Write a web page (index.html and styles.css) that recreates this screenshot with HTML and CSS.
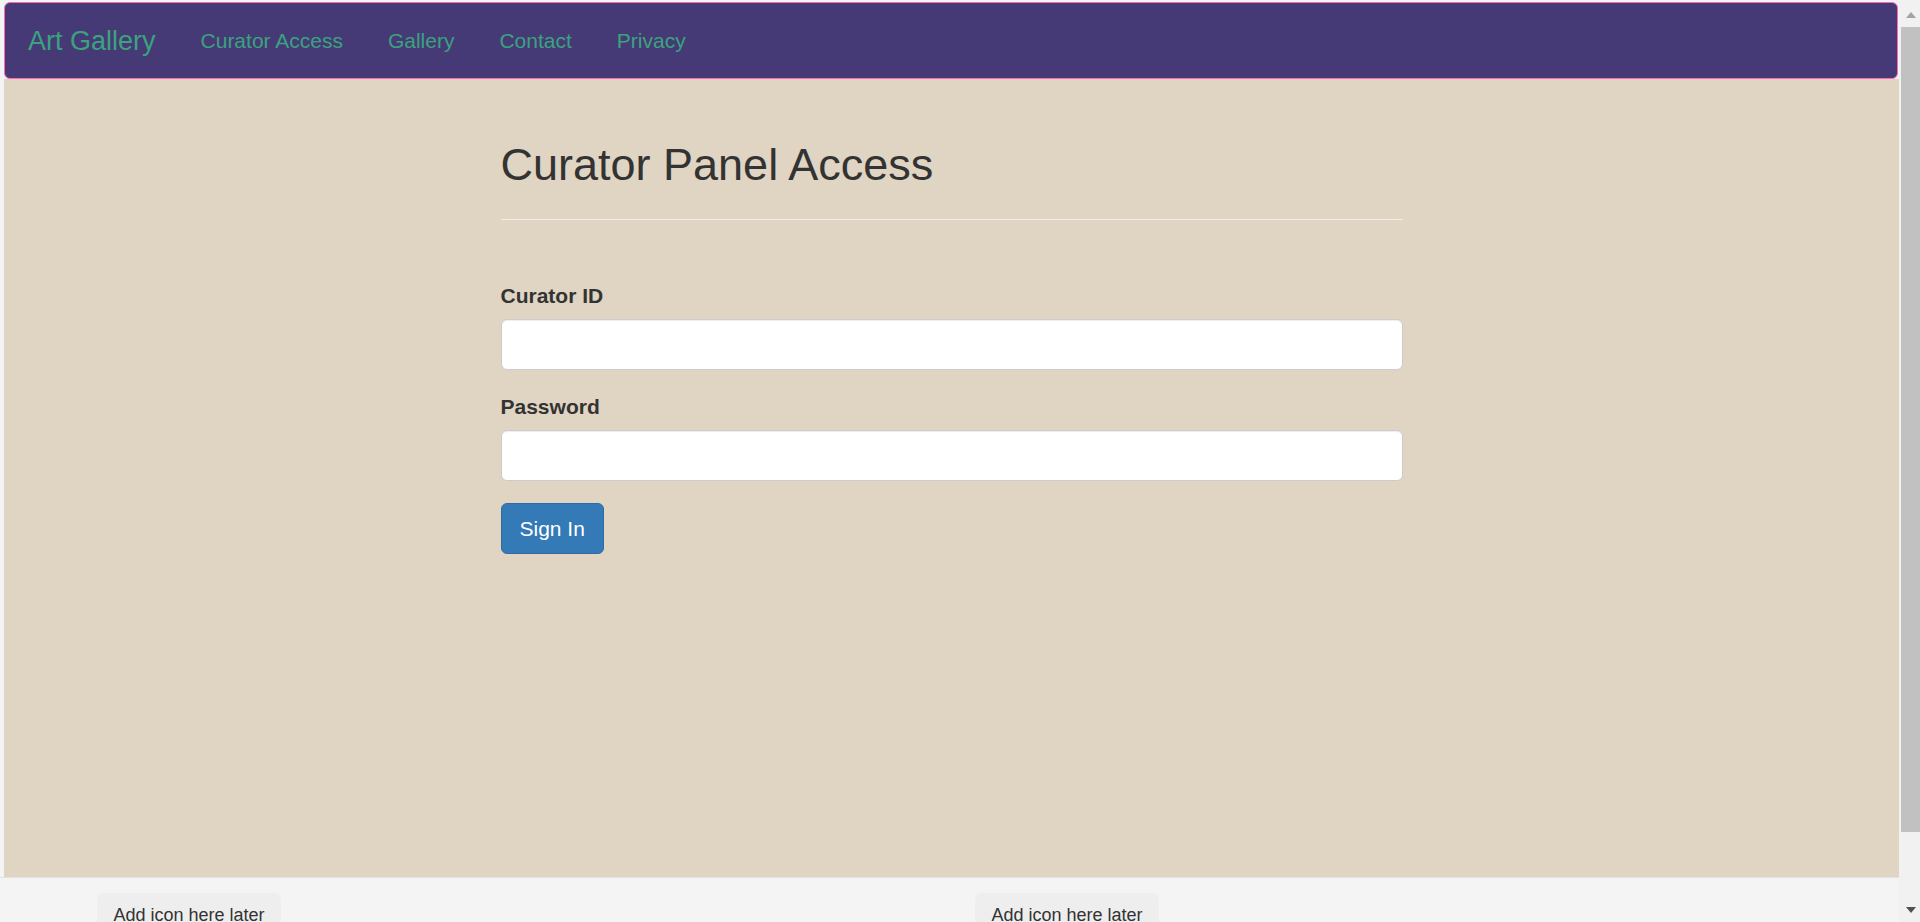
FILE: index.html
```html
<!DOCTYPE html>
<html lang="en">
<head>
<meta charset="utf-8">
<title>Art Gallery - Curator Panel Access</title>
<link rel="stylesheet" href="styles.css">
</head>
<body>
<div class="page">
  <nav class="navbar">
    <a class="brand" href="#">Art Gallery</a>
    <ul class="nav">
      <li><a class="nav-link" href="#">Curator Access</a></li>
      <li><a class="nav-link" href="#">Gallery</a></li>
      <li><a class="nav-link" href="#">Contact</a></li>
      <li><a class="nav-link" href="#">Privacy</a></li>
    </ul>
  </nav>
  <main class="main">
    <div class="panel">
      <h2 class="title">Curator Panel Access</h2>
      <hr class="rule">
      <form class="form">
        <div class="group">
          <label class="label" for="cid">Curator ID</label>
          <input class="input" id="cid" type="text">
        </div>
        <div class="group">
          <label class="label" for="pwd">Password</label>
          <input class="input" id="pwd" type="password">
        </div>
        <button class="btn" type="button">Sign In</button>
      </form>
    </div>
  </main>
  <footer class="footer">
    <div class="chip">Add icon here later</div>
    <div class="chip">Add icon here later</div>
  </footer>
</div>
<div class="scrollbar" aria-hidden="true">
  <div class="sb-up"><span class="arrow-up"></span></div>
  <div class="sb-thumb"></div>
  <div class="sb-track"></div>
  <div class="sb-down"><span class="arrow-down"></span></div>
</div>
</body>
</html>
```
FILE: styles.css
```css
* { box-sizing: border-box; }
html, body { margin: 0; padding: 0; }
body {
  display: flex;
  height: 922px;
  overflow: hidden;
  background: #f4f4f4;
  font-family: "Liberation Sans", Arial, Helvetica, sans-serif;
  font-size: 21px;
  line-height: 30px;
  color: #333333;
}
.page {
  flex: 1;
  min-width: 0;
  overflow: hidden;
}
.navbar {
  display: flex;
  align-items: center;
  height: 77px;
  margin: 2px 1px 0 4px;
  background: #463a76;
  border: 1px solid #ff69b4;
  border-radius: 6px;
}
.brand {
  font-size: 27px;
  line-height: 30px;
  padding: 0 22.5px 0 23px;
  color: #3aa37e;
  text-decoration: none;
}
.nav {
  display: flex;
  list-style: none;
  margin: 0;
  padding: 0;
}
.nav-link {
  display: block;
  padding: 22.5px;
  font-size: 21px;
  line-height: 30px;
  color: #3aa37e;
  text-decoration: none;
}
.main {
  height: 798px;
  margin: 0 0 0 4px;
  background: #e0d4c2;
  padding-top: 61px;
}
.panel {
  width: 902px;
  margin: 0 auto;
}
.title {
  margin: 0;
  font-size: 45px;
  line-height: 49.5px;
  font-weight: 500;
  color: #333333;
}
.rule {
  margin: 29.5px 0 0;
  border: 0;
  border-top: 1px solid #eeeeee;
}
.form { margin-top: 61px; }
.group { margin-bottom: 22.5px; }
.label {
  display: block;
  font-weight: bold;
  margin-bottom: 7.5px;
}
.input {
  display: block;
  width: 100%;
  height: 51px;
  padding: 9px 18px;
  font: inherit;
  background: #ffffff;
  border: 1px solid #cccccc;
  border-radius: 6px;
  box-shadow: inset 0 1px 1px rgba(0,0,0,.075);
}
.btn {
  display: inline-block;
  height: 51px;
  padding: 9px 18px;
  font: inherit;
  color: #ffffff;
  background: #337ab7;
  border: 1px solid #2e6da4;
  border-radius: 6px;
}
.footer {
  display: grid;
  grid-template-columns: 878px auto;
  justify-content: start;
  align-items: start;
  height: 133px;
  padding: 15px 0 0 97px;
  border-top: 1px solid #e2e2e2;
  background: #f4f4f4;
}
.chip {
  justify-self: start;
  padding: 9px 16.5px;
  font-size: 18px;
  line-height: 26px;
  color: #333333;
  background: #eeeeee;
  border-radius: 6px;
}
.scrollbar {
  display: flex;
  flex-direction: column;
  width: 21px;
  flex: none;
  background: #f1f1f1;
}
.sb-up {
  height: 27px;
  display: flex;
  justify-content: center;
  padding: 12px 0 0 2px;
}
.sb-thumb {
  height: 805px;
  margin-left: 2px;
  background: #c1c1c1;
}
.sb-track { flex: 1; }
.sb-down {
  height: 24px;
  display: flex;
  justify-content: center;
  padding: 9px 0 0 2px;
}
.arrow-up {
  width: 0;
  height: 0;
  border-left: 5.5px solid transparent;
  border-right: 5.5px solid transparent;
  border-bottom: 6px solid #a3a3a3;
}
.arrow-down {
  width: 0;
  height: 0;
  border-left: 5.5px solid transparent;
  border-right: 5.5px solid transparent;
  border-top: 6px solid #505050;
}
```
